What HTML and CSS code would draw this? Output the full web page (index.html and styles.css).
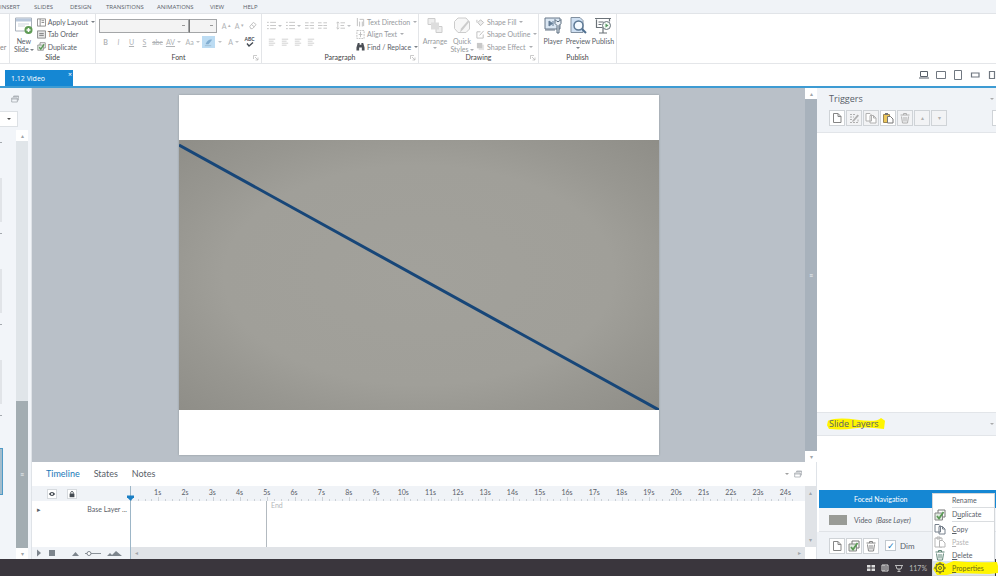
FILE: index.html
```html
<!DOCTYPE html>
<html lang="en">
<head>
<meta charset="utf-8">
<title>1.12 Video</title>
<link rel="stylesheet" href="styles.css">
</head>
<body>
<svg class="defs" aria-hidden="true">
  <symbol id="page" viewBox="0 0 12 12"><path d="M2.500 1.500h4.500l3 3v6h-7.500zM7 1.500v3h3" fill="#fff" stroke="currentColor"/></symbol>
  <symbol id="edit" viewBox="0 0 12 12"><path d="M2 2.500h5M2 5h4M2 7.500h2M2 10.500h8V7" fill="none" stroke="currentColor" stroke-dasharray="2 1"/><path d="M4.500 8.500l5-6 1.500 1.200-5 5.500-2 .6z" fill="currentColor"/></symbol>
  <symbol id="copy" viewBox="0 0 12 12"><path d="M1 1.500h4l1.500 1.500v6H1zM5 3.500h3.500l2.500 2.500v5H5zM8.500 3.500V6H11" fill="#fff" stroke="currentColor"/></symbol>
  <symbol id="paste" viewBox="0 0 12 12"><path d="M1.500 2.500h6v8h-6z" fill="#ecc75c" stroke="#9b8654"/><path d="M3 1h3v2H3z" fill="#777"/><path d="M5.500 4.500h3L11 7v4H5.500z" fill="#fff" stroke="#777"/></symbol>
  <symbol id="pasteoff" viewBox="0 0 12 12"><path d="M1 2h7v9H1zM3 1h3v2H3z" fill="#fff" stroke="currentColor"/><path d="M5.500 4.500h3L11 7v4H5.500z" fill="#fff" stroke="currentColor"/></symbol>
  <symbol id="trash" viewBox="0 0 12 12"><path d="M1.500 3h9M4.500 3V1.500h3V3M2.500 4.500l1 6.500h5l1-6.500M5 5v4.500M7 5v4.500" fill="none" stroke="currentColor"/></symbol>
  <symbol id="dup" viewBox="0 0 12 12"><path d="M4 1h7v7H4z" fill="#fff" stroke="#777"/><path d="M1 4h7.500v7H1z" fill="#dfe9df" stroke="#888"/><path d="M3 7l2 2.500L9.500 3" fill="none" stroke="#5b9956" stroke-width="1.800"/></symbol>
  <symbol id="restore" viewBox="0 0 12 12"><path d="M4 3.500V1.500h7.500v6H9.500M1 4.500h8.500v6H1zM1 6h8.500M4 2.500h7" fill="none" stroke="currentColor"/></symbol>
  <symbol id="launch" viewBox="0 0 6 6"><path d="M.5 4V.5H4M2 2l3 3M5 2.500V5H2.500" fill="none" stroke="#b5b5b5" stroke-width=".7"/></symbol>
  <symbol id="list" viewBox="0 0 10 10"><path d="M0 1.500h2M0 5h2M0 8.500h2M3.500 1.500H10M3.500 5H10M3.500 8.500H10" stroke="#c3c3c3" fill="none"/></symbol>
  <symbol id="align" viewBox="0 0 10 10"><path d="M1 1.500h8M1 4h6M1 6.500h8M1 9h6" stroke="#c8c8c8" fill="none"/></symbol>
</svg>

<nav class="menubar">
  <a href="#" class="m-insert">INSERT</a><a href="#" class="m-slides">SLIDES</a><a href="#" class="m-design">DESIGN</a><a href="#" class="m-trans">TRANSITIONS</a><a href="#" class="m-anim">ANIMATIONS</a><a href="#" class="m-view">VIEW</a><a href="#">HELP</a>
</nav>

<header class="ribbon">
  <section class="group g-edge"><span class="cut">er</span></section>
  <section class="group g-slide">
    <div class="body">
      <button class="big dark w-new"><svg class="i18" viewBox="0 0 18 18"><path d="M.5 1.500h16v13H.5z" fill="#fff" stroke="#a9b1bb"/><path d="M1 2h15v3H1z" fill="#b9c8dc"/><path d="M3 7.500h11M3 9.500h7" stroke="#cdd5de"/><circle cx="13.500" cy="13.500" r="4" fill="#5f9b55"/><path d="M11.500 13.500h4M13.500 11.500v4" stroke="#fff" stroke-width="1.500"/></svg><span>New</span><span>Slide<i class="car"></i></span></button>
      <div class="stack dark">
        <button><svg class="i9" viewBox="0 0 10 10"><path d="M.5 1h9v8h-9zM3.500 1v8M5 3h3M5 5h3" fill="none" stroke="#888"/></svg>Apply Layout<i class="car"></i></button>
        <button><svg class="i9" viewBox="0 0 10 10"><path d="M.5 1h9v8h-9z" fill="#e4e4e4" stroke="#888"/><path d="M2.500 4h5M2.500 6h5" stroke="#777"/></svg>Tab Order</button>
        <button><svg class="i9"><use href="#dup"/></svg>Duplicate</button>
      </div>
    </div>
    <h2>Slide</h2>
  </section>
  <section class="group g-font">
    <div class="body col">
      <div class="line tall">
        <select class="face" aria-label="Font"><option></option></select><select class="size" aria-label="Font size"><option></option></select>
        <button class="t grow-a">A<sup>▴</sup></button><button class="t">A<sup>▾</sup></button>
        <button class="t"><svg class="i9" viewBox="0 0 10 10"><path d="M2 6l4-4.500 3 2.500-4 4.500H3zM4 4l3 2.500" fill="none" stroke="#bbb"/></svg></button>
      </div>
      <div class="line fmt">
        <button class="t"><b>B</b></button><button class="t"><i>I</i></button><button class="t"><u>U</u></button><button class="t"><u>S</u></button><button class="t"><s>abc</s></button><button class="t wide"><u>AV</u><i class="car"></i></button><button class="t wide">Aa<i class="car"></i></button><button class="t hl"><svg class="i9" viewBox="0 0 10 10"><path d="M2 6c2-4 5-5 7-4L5 7H2z" fill="#81add0"/><path d="M1 8.500h7" stroke="#9ebcd3"/></svg></button><button class="t car-only"><i class="car"></i></button><button class="t wide">A<i class="car"></i></button><button class="t abc" aria-label="Spelling"><span>ABC</span><svg viewBox="0 0 8 5"><path d="M1 1.500l2 2.500 4-3.500" fill="none" stroke="#414850" stroke-width="1.300"/></svg></button>
      </div>
    </div>
    <h2>Font</h2><svg class="launch"><use href="#launch"/></svg>
  </section>
  <section class="group g-para">
    <div class="body">
      <div class="col para">
        <div class="line tall"><button class="t wide"><svg class="i9"><use href="#list"/></svg><i class="car"></i></button><button class="t wide"><svg class="i9"><use href="#list"/></svg><i class="car"></i></button><button class="t"><svg class="i9" viewBox="0 0 10 10"><path d="M0 2h4M0 5h4M0 8h4M6 2h4M5 5h5M6 8h4" stroke="#c3c3c3"/></svg></button><button class="t"><svg class="i9" viewBox="0 0 10 10"><path d="M0 2h4M0 5h5M0 8h4M6 2h4M6 5h4M6 8h4" stroke="#c3c3c3"/></svg></button><button class="t wide spacing"><svg class="i9" viewBox="0 0 10 10"><path d="M2 1v8M.5 2.500L2 1l1.500 1.500M.5 7.500L2 9l1.500-1.500M5 2h5M5 5h4M5 8h5" fill="none" stroke="#c3c3c3"/></svg><i class="car"></i></button></div>
        <div class="line fmt"><button class="t"><svg class="i8"><use href="#align"/></svg></button><button class="t"><svg class="i8"><use href="#align"/></svg></button><button class="t"><svg class="i8"><use href="#align"/></svg></button><button class="t"><svg class="i8"><use href="#align"/></svg></button></div>
      </div>
      <div class="stack">
        <button><svg class="i9" viewBox="0 0 10 10"><path d="M1.500 0v9M4 4v5.500M7 4v5.500M4 1.500h4.500V9" fill="none" stroke="#bbb"/></svg>Text Direction<i class="car"></i></button>
        <button><svg class="i9" viewBox="0 0 10 10"><path d="M1 .5h8v9H1z" fill="none" stroke="#bbb" stroke-dasharray="2 1"/><path d="M5 2v6M3 5h4" stroke="#bbb"/></svg>Align Text<i class="car"></i></button>
        <button class="dark"><svg class="i9" viewBox="0 0 10 10"><path d="M2 1h2v2h2V1h2l1.500 5v3.500h-3V6h-3v3.500h-3V6z" fill="#4b4f55"/></svg>Find / Replace<i class="car"></i></button>
      </div>
    </div>
    <h2>Paragraph</h2><svg class="launch"><use href="#launch"/></svg>
  </section>
  <section class="group g-draw">
    <div class="body">
      <button class="big w-arr"><svg class="i18" viewBox="0 0 18 18"><path d="M2 2h7v6H2zM10 10h6v6h-6z" fill="#eee" stroke="#ccc"/><path d="M5 6h8v7H5z" fill="#ddd"/></svg><span>Arrange</span><i class="car"></i></button>
      <button class="big w-quick"><svg class="i18" viewBox="0 0 18 18"><path d="M5 1.500h8l3.500 4v7L13 16H5l-3.500-4V5z" fill="#f7f7f7" stroke="#ccc"/><path d="M16.500 5L10 13l-3 3 1-4 7-8z" fill="#ccc"/></svg><span>Quick</span><span>Styles<i class="car"></i></span></button>
      <div class="stack">
        <button><svg class="i9" viewBox="0 0 10 10"><path d="M2 5l3-3 3.500 3L5 8.500zM1 2v3" fill="#eee" stroke="#bbb"/></svg>Shape Fill<i class="car"></i></button>
        <button><svg class="i9" viewBox="0 0 10 10"><path d="M8 5v4H1V2h4M4 6l4.500-5" fill="none" stroke="#bbb"/></svg>Shape Outline<i class="car"></i></button>
        <button><svg class="i9" viewBox="0 0 10 10"><path d="M3 3h6v6H3z" fill="#e5e5e5"/><path d="M1 1h6v6H1z" fill="#c8c8c8"/></svg>Shape Effect<i class="car"></i></button>
      </div>
    </div>
    <h2>Drawing</h2><svg class="launch"><use href="#launch"/></svg>
  </section>
  <section class="group g-pub">
    <div class="body dark">
      <button class="big"><svg class="i18" viewBox="0 0 18 18"><path d="M1 1.500h15v11H1z" fill="#dbe7f3" stroke="#667788"/><path d="M1 13.500h10" stroke="#667788"/><path d="M5 4.500v5L8.500 7zM9 4.500v5" fill="#647d96" stroke="#647d96"/><path d="M11 3v4l2 2v7.500h2V9l2-2V3l-2 2h-2z" fill="#e7eef5" stroke="#596b7d"/></svg><span>Player</span></button>
      <button class="big"><svg class="i18" viewBox="0 0 18 18"><path d="M2 1h9l3 3v12H2z" fill="#cfe0f2" stroke="#8190a0"/><circle cx="9.500" cy="9" r="4.500" fill="#f4faff" stroke="#5c7894" stroke-width="1.500"/><path d="M13 12.500l4 4" stroke="#4e6f90" stroke-width="2"/></svg><span>Preview</span><i class="car"></i></button>
      <button class="big"><svg class="i18" viewBox="0 0 18 18"><path d="M1 2h16M2.500 3v8h6M4.500 5.500h5M4.500 8h3M9 11v5M5 16.500h8M15.500 2v3" fill="none" stroke="#6b7278" stroke-width="1.200"/><circle cx="12.500" cy="9" r="4" fill="#f3faf4" stroke="#68717b"/><path d="M11.500 7v4l3-2z" fill="#559560"/></svg><span>Publish</span></button>
    </div>
    <h2>Publish</h2>
  </section>
</header>

<div class="tabstrip">
  <div class="doc"><span>1.12 Video</span><button aria-label="Close">×</button></div>
  <div class="devices">
    <button aria-label="Desktop"><svg viewBox="0 0 12 10"><path d="M2.500 1.500h7v5h-7zM1 8h10" fill="none" stroke="#59616a"/></svg></button>
    <button aria-label="Tablet landscape"><svg viewBox="0 0 12 10"><path d="M1.500 1.500h9v7h-9z" fill="none" stroke="#707780"/></svg></button>
    <button aria-label="Tablet portrait"><svg viewBox="0 0 12 10"><path d="M2.500.5h7v9h-7z" fill="none" stroke="#707780"/></svg></button>
    <button aria-label="Phone landscape"><svg viewBox="0 0 12 10"><path d="M2.500 3h7.500v4H2.500z" fill="none" stroke="#707780" stroke-width="1.200"/></svg></button>
    <button aria-label="Phone portrait"><svg viewBox="0 0 12 10"><path d="M3.500 1.500h5v7h-5z" fill="none" stroke="#707780" stroke-width="1.200"/></svg></button>
  </div>
</div>

<main class="work">
  <aside class="scenes">
    <svg class="restore"><use href="#restore"/></svg>
    <button class="pick" aria-label="Scene"><i class="car"></i></button>
    <div class="thumbs">
      <div class="list"><span class="mark"></span><span class="thumb"></span><span class="mark"></span><span class="thumb"></span><span class="mark"></span><span class="thumb"></span><span class="mark"></span><span class="thumb on"></span></div>
      <div class="vbar"><b>▴</b><div class="track"></div><div class="grip">≡</div><b>▾</b></div>
    </div>
  </aside>

  <div class="center">
    <div class="stage">
      <div class="slide">
        <svg viewBox="0 0 480 270" preserveAspectRatio="none">
          <defs><radialGradient id="v" cx=".5" cy=".5" r=".7"><stop offset="0" stop-color="#a2a19b"/><stop offset=".58" stop-color="#a09f99"/><stop offset=".76" stop-color="#989791"/><stop offset="1" stop-color="#8f8e88"/></radialGradient></defs>
          <path d="M0 0h480v270H0z" fill="url(#v)"/><path d="M0 5L480 270" stroke="#174678" stroke-width="3"/>
        </svg>
      </div>
      <div class="vbar stagebar"><b>▴</b><div class="grip">≡</div><b>▾</b></div>
    </div>
    <section class="timeline">
      <div class="tabs"><button class="on">Timeline</button><button>States</button><button>Notes</button><i class="car"></i><svg class="restore"><use href="#restore"/></svg></div>
      <div class="tl">
        <div class="names">
          <div class="head"><button aria-label="Show"><svg viewBox="0 0 10 10"><path d="M1 5q4-5 8 0-4 5-8 0z" fill="#444b52"/><circle cx="5" cy="5" r="1.300" fill="#fff"/></svg></button><button aria-label="Lock"><svg viewBox="0 0 10 10"><path d="M2 4.500h6V9H2z" fill="#444b52"/><path d="M3.500 5V2.500q1.500-2 3 0V5" fill="none" stroke="#444b52"/></svg></button></div>
          <div class="row"><span class="tri">▸</span><span>Base Layer ...</span></div>
          <div class="foot"><svg viewBox="0 0 96 12"><path d="M5 2.500v7l4-3.500zM17 3h6v6h-6z" fill="#7d858d"/><path d="M40 9l3.500-4L47 9zM75 9l3-3 2 2 4-4 6 5z" fill="#7d858d"/><path d="M53 6.500h16" stroke="#8b9299"/><circle cx="57" cy="6.500" r="2" fill="#fff" stroke="#7d858d"/></svg></div>
        </div>
        <div class="time">
          <div class="ruler"><div class="secs" id="secs"></div><div class="ticks" id="ticks"></div></div>
          <div class="lane"><div class="dur"></div><span>End</span></div>
          <div class="hbar"><b>◂</b><b>▸</b></div>
          <svg class="head-mark" viewBox="0 0 8 6"><path d="M0 0h8v2L4 6 0 2z" fill="#1a7fc4"/></svg>
        </div>
        <div class="tbar"><b>▴</b><b>▾</b><i></i></div>
      </div>
    </section>
  </div>

  <aside class="side">
    <section class="panel-head trig"><div class="ttl"><h3>Triggers</h3><i class="car"></i></div>
      <div class="tools"><button aria-label="New trigger"><svg class="i12"><use href="#page"/></svg></button><button class="off" aria-label="Edit"><svg class="i12"><use href="#edit"/></svg></button><button class="off" aria-label="Copy"><svg class="i12"><use href="#copy"/></svg></button><button aria-label="Paste"><svg class="i12"><use href="#paste"/></svg></button><button class="off" aria-label="Delete"><svg class="i12"><use href="#trash"/></svg></button><button class="off">▴</button><button class="off">▾</button><button class="last" aria-label="Variables"></button></div>
    </section>
    <div class="blank"></div>
    <section class="panel-head lay"><div class="ttl"><h3><svg viewBox="0 0 58 14" preserveAspectRatio="none"><path d="M1 4Q10 0 30 3T54 1l4 3-1 9Q40 10 28 12T2 13L0 9z" fill="#fff500"/></svg><span>Slide Layers</span></h3><i class="car"></i></div></section>
    <div class="space"></div>
    <div class="layer sel"><span>Foced Navigation</span></div>
    <div class="layer base"><span class="pic"></span><span>Video</span><em>(Base Layer)</em></div>
    <div class="layer-tools"><button aria-label="New layer"><svg class="i12"><use href="#page"/></svg></button><button aria-label="Duplicate layer"><svg class="i12"><use href="#dup"/></svg></button><button aria-label="Delete layer"><svg class="i12"><use href="#trash"/></svg></button><input type="checkbox" id="dim" checked><label for="dim">Dim</label></div>
  </aside>
</main>

<footer class="status">
  <svg viewBox="0 0 8 8"><path d="M0 1h3.500v2.500H0zM4.500 1H8v2.500H4.500zM0 4.500h3.500V7H0zM4.500 4.500H8V7H4.500z" fill="#ddd"/></svg>
  <svg viewBox="0 0 8 8"><path d="M1 1h6v6H1z" fill="none" stroke="#ddd"/><path d="M3 1v6M4 3h2M4 5h2" stroke="#ddd"/></svg>
  <svg viewBox="0 0 8 8"><path d="M0 1.500h8M1 2l1 3h4l1-3M4 5v2M2.500 7.500h3" fill="none" stroke="#bbb"/></svg>
  <span>117%</span>
</footer>

<div class="menu">
  <button class="sep"><i></i><span>Rename</span></button>
  <button class="sep"><svg class="i12"><use href="#dup"/></svg><span>D<u>u</u>plicate</span></button>
  <button><svg class="i12 slate"><use href="#copy"/></svg><span><u>C</u>opy</span></button>
  <button class="dis"><svg class="i12"><use href="#pasteoff"/></svg><span><u>P</u>aste</span></button>
  <button><svg class="i12 green"><use href="#trash"/></svg><span><u>D</u>elete</span></button>
  <button class="prop"><svg class="mark-bg" viewBox="0 0 66 14" preserveAspectRatio="none"><path d="M3 2q5-3 10 1l8-3q20 2 44 1l1 4v7l-9 1-35-1-8 2H4L0 8z" fill="#fff500"/></svg><svg class="i12" viewBox="0 0 12 12"><circle cx="6" cy="6" r="4" fill="none" stroke="#6b6a26" stroke-width="1.300"/><circle cx="6" cy="6" r="1.500" fill="none" stroke="#6b6a26"/><path d="M6 0v2M6 10v2M0 6h2M10 6h2M2 2l1 1M9 9l1 1M10 2L9 3M3 9l-1 1" stroke="#6b6a26"/></svg><span><u>P</u>roperties</span></button>
</div>
<script src="ruler.js"></script>
</body>
</html>
```
FILE: ruler.js
```js
const secs = document.getElementById('secs');
const ticks = document.getElementById('ticks');
for (let s = 1; s <= 24; s++) {
  const label = document.createElement('span');
  label.textContent = s + 's';
  secs.append(label);
}
for (let t = 0; t < 98; t++) ticks.append(document.createElement('i'));
```
FILE: styles.css
```css
* { box-sizing: border-box; }
html, body { height: 100%; }
body { margin: 0; padding-right: 2px; display: flex; flex-direction: column; overflow: hidden; position: relative; background: #fff; color: #596068; font: 7px/8px Lato, "Open Sans", sans-serif; }
button { border: 0; padding: 0; margin: 0; background: none; color: inherit; font: inherit; }
h2, h3 { margin: 0; font-weight: 400; }
svg { display: block; flex: none; }
.defs { position: absolute; width: 0; height: 0; }
.i8 { width: 8px; height: 8px; }
.i9 { width: 9px; height: 9px; }
.i12 { width: 12px; height: 12px; }
.i18 { width: 18px; height: 19px; }
.car { display: inline-block; flex: none; border: 2px solid transparent; border-top-color: currentColor; border-bottom: 0; height: 2px; width: 4px; opacity: .8; }

.menubar { flex: none; height: 13px; display: flex; align-items: center; background: #f0f3f7; font-family: "Open Sans", "Noto Sans", sans-serif; font-size: 6px; }
.menubar a { color: #5a626a; text-decoration: none; }
.m-insert { width: 34px; }
.m-slides { width: 36px; }
.m-design { width: 36px; }
.m-trans { width: 51px; }
.m-anim { width: 53px; }
.m-view { width: 33px; }

.ribbon { flex: none; height: 51px; display: flex; border-top: 1px solid #e1e4e8; border-bottom: 1px solid #e4e6e9; }
.group { position: relative; flex: none; border-right: 1px solid #e3e5e8; display: flex; flex-direction: column; }
.group h2 { font-size: 7px; line-height: 9px; text-align: center; color: #444; }
.body { flex: none; height: 39px; display: flex; padding-top: 2px; color: #96999d; }
.col { flex-direction: column; }
.dark, .body .dark { color: #596068; }
.g-edge { width: 10px; padding-top: 29px; }
.g-slide { width: 86px; }
.g-slide .body { padding-left: 1px; }
.g-font { width: 166px; }
.g-para { width: 157px; }
.g-draw { width: 120px; }
.g-pub { width: 78px; }
.launch { position: absolute; right: 2px; bottom: 2px; width: 6px; height: 6px; }
.big { display: flex; flex-direction: column; align-items: center; width: 24px; white-space: nowrap; }
.big svg { margin-bottom: 2px; }
.big > .car { margin-top: 2px; }
.w-new { width: 27px; }
.w-arr { width: 32px; }
.w-quick { width: 22px; }
.stack { display: flex; flex-direction: column; justify-content: space-around; height: 37px; padding-left: 3px; }
.w-new + .stack { padding-left: 0; }
.stack button { display: flex; align-items: center; gap: 2px; white-space: nowrap; }
.stack .car { margin-left: 1px; }
.big span .car { margin: 0 0 1px 1px; }
.line { display: flex; align-items: center; }
.tall { height: 19px; }
.fmt { height: 14px; }
.t { width: 13px; height: 12px; display: flex; align-items: center; justify-content: center; gap: 2px; color: #b0b3b6; }
.t.wide { width: 19px; }
.t.hl { background: #bcdcf3; }
.t.car-only { width: 9px; }
.t.spacing { margin-left: 5px; }
.t sup { font-size: 5px; line-height: 5px; }
.t.abc { flex-direction: column; gap: 0; color: #414850; font-size: 5px; line-height: 5px; font-weight: 700; }
.abc svg { width: 8px; height: 5px; }
.g-font .body { padding-left: 3px; }
.grow-a { margin-left: 3px; }
select { appearance: none; height: 14px; border: 1px solid #a4a6a8; border-radius: 0; background: linear-gradient(#999, #999) right 3px center / 3px 1px no-repeat #f3f3f3; font: inherit; padding: 0; }
.face { width: 90px; }
.size { width: 28px; border-left-color: #777; }
.para { width: 92px; padding-left: 3px; }
.g-pub .body { padding-left: 2px; gap: 1px; }
.cut { color: #888; }

.tabstrip { flex: none; height: 24px; border-bottom: 2px solid #3d9bd3; display: flex; align-items: flex-end; justify-content: space-between; padding-left: 5px; }
.doc { height: 16px; width: 68px; background: #1587d3; color: #fff; display: flex; justify-content: space-between; padding: 0 1px 0 6px; font: 7px/17px "Open Sans", sans-serif; }
.doc button { height: 9px; line-height: 9px; }
.devices { display: flex; height: 22px; align-items: center; gap: 5px; overflow: hidden; width: 78px; }
.devices svg { width: 12px; height: 10px; }

.work { flex: 1; min-height: 0; display: flex; }
.scenes { width: 32px; background: #f2f5f9; border-right: 1px solid #dfe3e8; display: flex; flex-direction: column; }
.restore { width: 8px; height: 8px; color: #959ba1; }
.scenes .restore { margin: 7px 0 8px 11px; }
.pick { width: 18px; height: 16px; background: #fff; border: 1px solid #dde1e5; border-left: 0; display: flex; align-items: center; justify-content: center; color: #222; }
.thumbs { flex: 1; min-height: 0; display: flex; justify-content: space-between; padding: 3px 3px 0 0; }
.list { padding-top: 12px; }
.mark { display: block; width: 2px; height: 1px; background: #a4a9ae; }
.thumb { display: block; width: 2px; height: 44px; margin: 35px 0 11px; background: #e1e4e8; }
.thumb.on { width: 3px; height: 47px; margin: 32px 0 0; background: #a3bdcd; border: solid #4f9ac6; border-width: 1px 1px 1px 0; }
.vbar { width: 12px; display: flex; flex-direction: column; text-align: center; color: #eef1f4; }
.vbar b, .tbar b, .hbar b { font-weight: 400; color: #a0a5aa; font-size: 6px; }
.vbar b { background: #fff; height: 11px; line-height: 11px; }
.vbar .track { flex: 259; background: #e0e5e9; }
.vbar .grip { flex: 147; background: #a3adb2; display: flex; align-items: center; justify-content: center; }

.center { flex: 1; min-width: 0; display: flex; flex-direction: column; }
.stage { flex: 1; min-height: 0; display: flex; justify-content: center; align-items: center; background: #b9c0c8; position: relative; padding-right: 12px; }
.slide { height: calc(100% - 14px); aspect-ratio: 4 / 3; background: #fff; display: flex; align-items: center; box-shadow: 0 0 2px #8f969d; }
.slide svg { width: 100%; height: 75%; }
.stagebar { position: absolute; right: 0; top: 0; bottom: 0; }
.stagebar .grip { background: #a8b2bc; }

.timeline { flex: none; height: 97px; display: flex; flex-direction: column; border-right: 1px solid #dfe3e8; }
.tabs { height: 24px; display: flex; align-items: center; gap: 14px; padding: 0 14px; font-size: 9px; line-height: 12px; }
.tabs .on { color: #1878b8; }
.tabs .car { margin-left: auto; color: #888; }
.tabs .restore { margin-left: -9px; }
.tl { flex: 1; display: flex; }
.names { width: 98px; display: flex; flex-direction: column; }
.head { height: 15px; display: flex; align-items: center; gap: 10px; padding-left: 15px; background: #f0f3f7; }
.head button { width: 10px; height: 10px; border: 1px solid #d5d9dd; background: #fff; }
.head svg { width: 8px; height: 8px; }
.row { flex: 1; display: flex; justify-content: space-between; padding: 4px 3px 0 5px; }
.foot { height: 12px; background: #f0f3f7; }
.foot svg { width: 96px; height: 12px; }
.time { flex: 1; position: relative; display: flex; flex-direction: column; border-left: 1px solid #9db6c7; }
.ruler { height: 15px; background: #f0f3f7; padding-right: 6px; display: flex; flex-direction: column; justify-content: space-between; }
.secs { display: grid; grid-template-columns: repeat(24, 1fr); padding-left: 13px; text-align: center; padding-top: 2px; }
.ticks { display: flex; align-items: flex-end; height: 4px; }
.ticks i { flex: 1; height: 2px; border-left: 1px solid #ccd1d6; }
.ticks i:nth-child(4n+1) { height: 4px; }
.lane { flex: 1; display: flex; color: #b3b6b9; }
.dur { width: 136px; border-right: 1px solid #b3bac0; margin-right: 4px; }
.hbar { height: 12px; background: #e0e3e7; display: flex; align-items: center; justify-content: space-between; padding: 0 4px; }
.head-mark { position: absolute; left: -4px; top: 9px; width: 7px; height: 6px; }
.tbar { width: 11px; background: #e0e3e7; display: flex; flex-direction: column; justify-content: space-between; text-align: center; }
.tbar b:first-child { margin-top: 3px; flex: 1; }
.tbar b { margin-bottom: 3px; }
.tbar i { height: 12px; background: #fff; }

.side { width: 179px; display: flex; flex-direction: column; }
.panel-head { background: #f0f3f7; border: solid #e2e5e9; border-width: 0 0 1px; padding-left: 12px; }
.ttl { display: flex; justify-content: space-between; align-items: center; height: 22px; padding-right: 2px; }
.ttl .car { color: #999; }
.ttl h3 { font: 9px/12px "Open Sans", "Noto Sans", sans-serif; position: relative; }
.trig { height: 45px; overflow: hidden; }
.lay { height: 24px; border-top-width: 1px; }
.lay h3 svg { position: absolute; left: -2px; top: -1px; width: 58px; height: 13px; }
.lay h3 span { position: relative; }
.tools, .layer-tools { display: flex; gap: 1px; }
.tools button, .layer-tools button { flex: none; width: 16px; height: 16px; border: 1px solid #cfd3d7; background: #fff; display: flex; align-items: center; justify-content: center; color: #858585; font-size: 6px; }
.tools .off { background: #f2f3f5; color: #b0b0b0; }
.tools .last { margin-left: 44px; }
.blank { flex: 1; }
.space { height: 54px; }
.layer { margin-left: 2px; display: flex; align-items: center; }
.sel { height: 18px; background: #1587d3; color: #fff; padding-left: 35px; }
.base { height: 24px; background: #f3f5f8; border-bottom: 1px solid #e0e3e7; padding-left: 10px; gap: 4px; }
.pic { width: 18px; height: 10px; background: #999b96; margin-right: 3px; }
.layer-tools { height: 27px; background: #f0f3f7; align-items: center; padding-left: 12px; gap: 1px; font-size: 8px; }
.layer-tools input { appearance: none; width: 11px; height: 11px; margin: 0 3px 0 5px; border: 1px solid #c2c8ce; background: #fff; display: grid; place-items: center; color: #1878b8; }
.layer-tools input:checked::before { content: "✓"; font-size: 9px; line-height: 8px; }

.status { flex: none; height: 17px; background: #3a363d; display: flex; align-items: center; justify-content: flex-end; gap: 6px; color: #bbb; padding-right: 69px; }
.status svg { width: 8px; height: 8px; }

.menu { position: absolute; right: 3px; bottom: 0; width: 63px; background: #fff; border: 1px solid #d4d7da; display: flex; flex-direction: column; }
.menu button { display: flex; align-items: center; height: 13px; padding-left: 1px; gap: 6px; text-align: left; position: relative; }
.menu button > i { width: 12px; }
.menu span { flex: 1; line-height: 12px; }
.menu .sep { height: 14px; }
.menu .sep span { border-bottom: 1px solid #dadde0; line-height: 13px; }
.menu .dis { color: #b5b5b5; }
.menu .green { color: #5c8474; }
.menu .slate { color: #77808c; }
.menu .prop { height: 14px; background: #dbe4ed; color: #6b6a1c; }
.menu .prop .i12, .menu .prop span { position: relative; }
.mark-bg { position: absolute; left: 0; top: 0; width: 65px; height: 14px; }
```
